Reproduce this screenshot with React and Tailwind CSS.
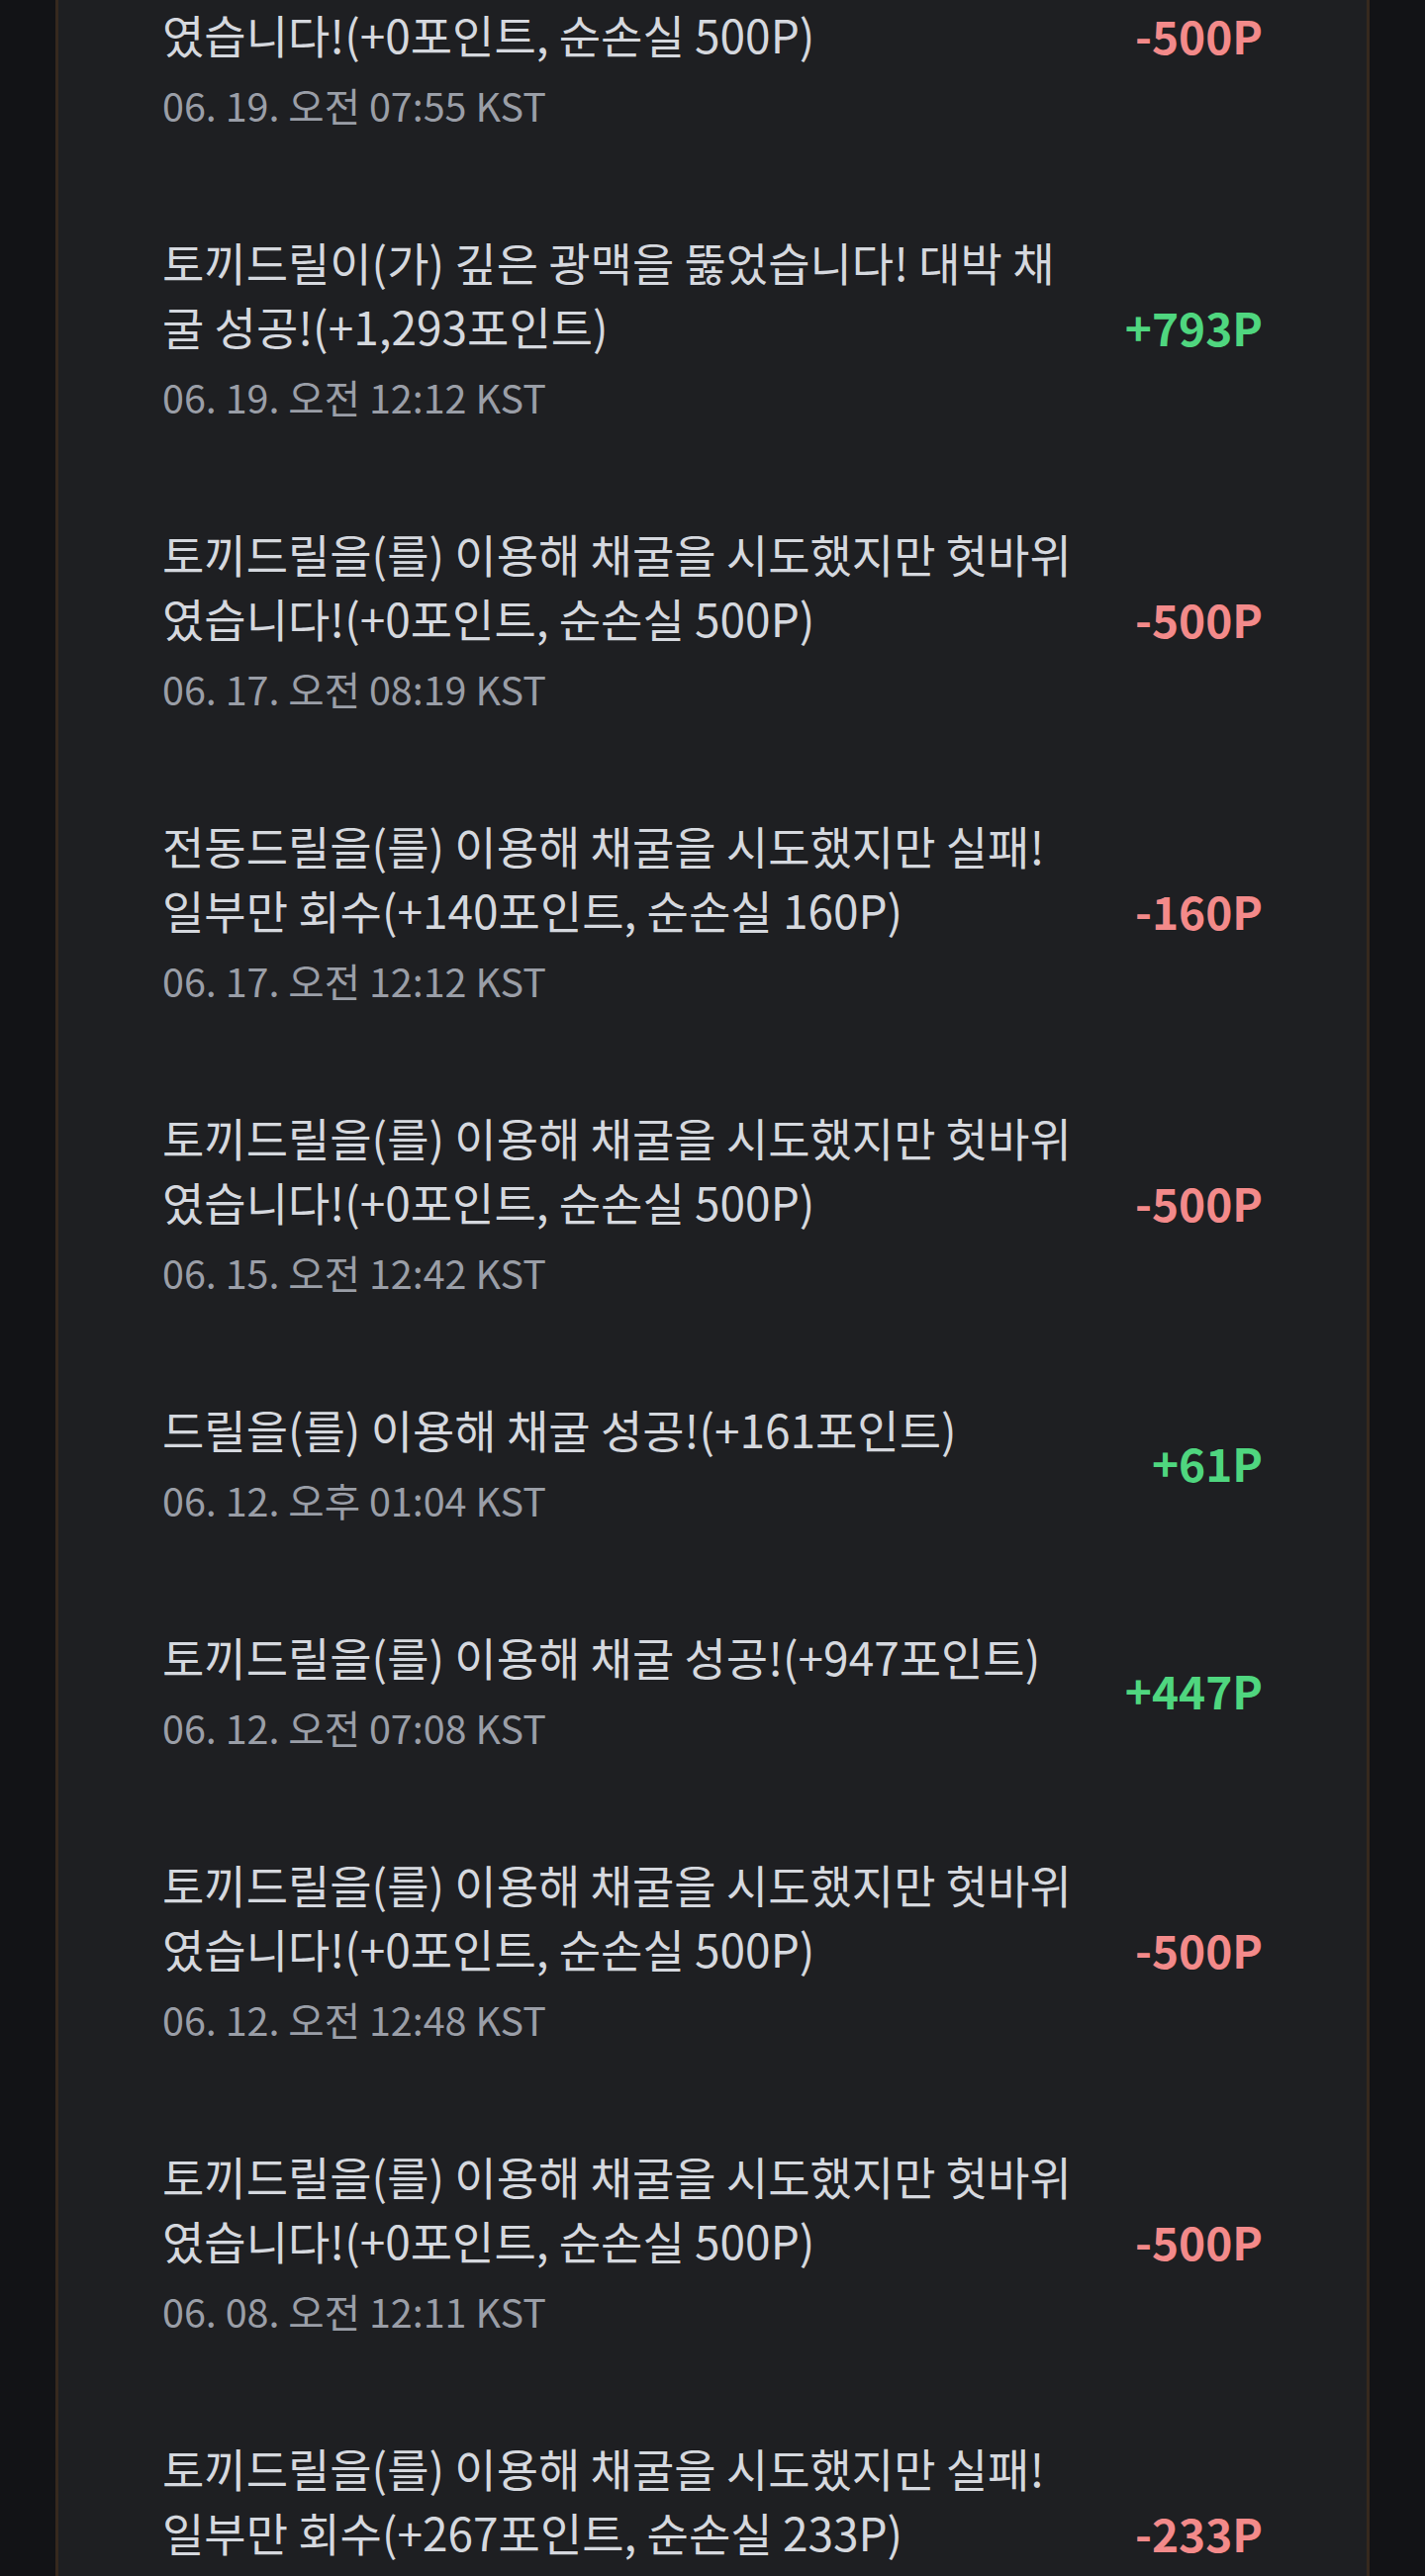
import React from "react";

const rows = [
  { lines: ["토끼드릴을(를) 이용해 채굴을 시도했지만 헛바위", "였습니다!(+0포인트, 순손실 500P)"], date: "06. 19. 오전 07:55 KST", amount: "-500P", pos: false },
  { lines: ["토끼드릴이(가) 깊은 광맥을 뚫었습니다! 대박 채", "굴 성공!(+1,293포인트)"], date: "06. 19. 오전 12:12 KST", amount: "+793P", pos: true },
  { lines: ["토끼드릴을(를) 이용해 채굴을 시도했지만 헛바위", "였습니다!(+0포인트, 순손실 500P)"], date: "06. 17. 오전 08:19 KST", amount: "-500P", pos: false },
  { lines: ["전동드릴을(를) 이용해 채굴을 시도했지만 실패!", "일부만 회수(+140포인트, 순손실 160P)"], date: "06. 17. 오전 12:12 KST", amount: "-160P", pos: false },
  { lines: ["토끼드릴을(를) 이용해 채굴을 시도했지만 헛바위", "였습니다!(+0포인트, 순손실 500P)"], date: "06. 15. 오전 12:42 KST", amount: "-500P", pos: false },
  { lines: ["드릴을(를) 이용해 채굴 성공!(+161포인트)"], date: "06. 12. 오후 01:04 KST", amount: "+61P", pos: true },
  { lines: ["토끼드릴을(를) 이용해 채굴 성공!(+947포인트)"], date: "06. 12. 오전 07:08 KST", amount: "+447P", pos: true },
  { lines: ["토끼드릴을(를) 이용해 채굴을 시도했지만 헛바위", "였습니다!(+0포인트, 순손실 500P)"], date: "06. 12. 오전 12:48 KST", amount: "-500P", pos: false },
  { lines: ["토끼드릴을(를) 이용해 채굴을 시도했지만 헛바위", "였습니다!(+0포인트, 순손실 500P)"], date: "06. 08. 오전 12:11 KST", amount: "-500P", pos: false },
  { lines: ["토끼드릴을(를) 이용해 채굴을 시도했지만 실패!", "일부만 회수(+267포인트, 순손실 233P)"], date: "06. 07. 오전 08:02 KST", amount: "-233P", pos: false },
];

function Row({ r }) {
  return (
    <div className="flex items-center justify-between py-[49px]">
      <div className="min-w-0">
        {r.lines.map((l, i) => (
          <p key={i} className="whitespace-nowrap text-[46px] leading-[65px] text-[#d5d8de]">
            {l}
          </p>
        ))}
        <p className="mt-[10px] whitespace-nowrap text-[39.5px] leading-[57px] text-[#9a9ea7]">{r.date}</p>
      </div>
      <div
        className={
          r.pos
            ? "shrink-0 text-[46px] font-bold leading-[65px] text-[#4fd67f]"
            : "shrink-0 text-[46px] font-bold leading-[65px] text-[#f38a8a]"
        }
      >
        {r.amount}
      </div>
    </div>
  );
}

export default function App() {
  return (
    <div
      className="h-[2604px] overflow-hidden bg-[#121316] px-[56px]"
      style={{ fontFamily: '"Noto Sans CJK KR", "Noto Sans", sans-serif' }}
    >
      <div className="-mt-[112px] min-h-[2800px] border-x-[3px] border-[#36291e] bg-[#1e1f22] px-[105px]">
        {rows.map((r, i) => (
          <Row key={i} r={r} />
        ))}
      </div>
    </div>
  );
}
